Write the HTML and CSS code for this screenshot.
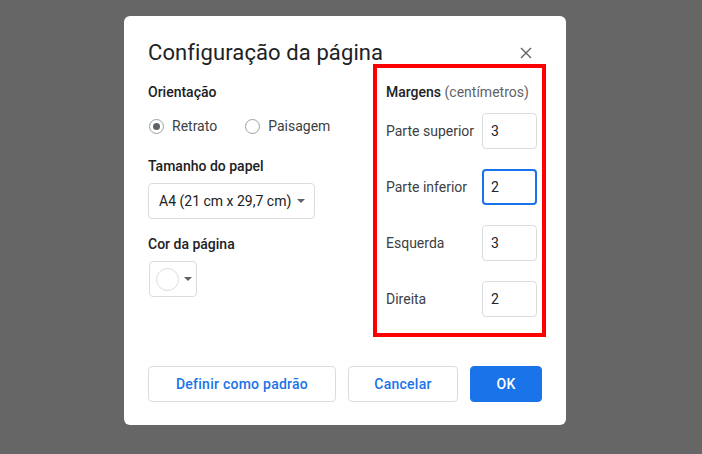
FILE: index.html
```html
<!DOCTYPE html>
<html lang="pt">
<head>
<meta charset="utf-8">
<title>Configuração da página</title>
<link rel="stylesheet" href="styles.css">
</head>
<body>
<div class="dialog">
  <div class="header">
    <div class="title">Configuração da página</div>
    <button class="close" aria-label="Fechar">
      <svg width="12" height="12" viewBox="0 0 12 12"><path d="M1 1L11 11M11 1L1 11" stroke="#5f6368" stroke-width="1.4" fill="none"/></svg>
    </button>
  </div>
  <div class="content">
    <div class="left">
      <div class="label label-orient">Orientação</div>
      <div class="radios">
        <label class="radio"><span class="dot checked"></span>Retrato</label>
        <label class="radio"><span class="dot"></span>Paisagem</label>
      </div>
      <div class="label label-size">Tamanho do papel</div>
      <div class="select">A4 (21 cm x 29,7 cm)<span class="caret"></span></div>
      <div class="label label-color">Cor da página</div>
      <div class="colorbtn"><span class="swatch"></span><span class="caret"></span></div>
    </div>
    <div class="margins">
      <div class="label label-margins">Margens <span class="unit">(centímetros)</span></div>
      <div class="mrow"><span>Parte superior</span><div class="input">3</div></div>
      <div class="mrow"><span>Parte inferior</span><div class="input focused">2</div></div>
      <div class="mrow"><span>Esquerda</span><div class="input">3</div></div>
      <div class="mrow"><span>Direita</span><div class="input">2</div></div>
    </div>
  </div>
  <div class="actions">
    <button class="btn btn-outline btn-default">Definir como padrão</button>
    <button class="btn btn-outline btn-cancel">Cancelar</button>
    <button class="btn btn-primary">OK</button>
  </div>
</div>
</body>
</html>
```

FILE: styles.css
```css
html, body {
  margin: 0;
  padding: 0;
  background: #666666;
  width: 702px;
  height: 454px;
  overflow: hidden;
}

body {
  font-family: Roboto, "Liberation Sans", Arial, sans-serif;
  color: #202124;
}

.dialog {
  box-sizing: border-box;
  margin: 16px 0 0 124px;
  width: 442px;
  height: 409px;
  background: #ffffff;
  border-radius: 6px;
  padding: 26px 24px 23px 24px;
  display: flex;
  flex-direction: column;
}

.header {
  height: 22px;
  display: flex;
  align-items: center;
  justify-content: space-between;
}

.title {
  font-size: 22px;
  line-height: 22px;
  color: #202124;
  font-weight: 400;
  letter-spacing: 0.1px;
}

.close {
  border: 0;
  background: transparent;
  padding: 0;
  margin: 0 10px 0 0;
  width: 12px;
  height: 12px;
  display: flex;
}

.content {
  display: flex;
  height: 273px;
  align-items: flex-start;
}

.left {
  width: 225px;
  flex-shrink: 0;
  display: flex;
  flex-direction: column;
  align-items: flex-start;
}

.label {
  font-size: 14px;
  line-height: 20px;
  font-weight: 500;
  color: #202124;
}

.label-orient { margin-top: 18px; }
.label-size { margin-top: 20px; }
.label-color { margin-top: 15px; }

.radios {
  margin-top: 14px;
  display: flex;
  gap: 27px;
  height: 20px;
  align-items: center;
}

.radio {
  display: flex;
  align-items: center;
  gap: 8px;
  font-size: 14px;
  color: #3c4043;
  margin-left: 1px;
}

.dot {
  box-sizing: border-box;
  width: 15px;
  height: 15px;
  border-radius: 50%;
  border: 1px solid #9aa0a6;
  display: flex;
  align-items: center;
  justify-content: center;
}

.dot.checked::after {
  content: "";
  width: 7px;
  height: 7px;
  border-radius: 50%;
  background: #5f6368;
}

.select {
  box-sizing: border-box;
  margin-top: 7px;
  height: 36px;
  width: 167px;
  border: 1px solid #dadce0;
  border-radius: 4px;
  padding: 0 9px 0 10px;
  display: flex;
  align-items: center;
  justify-content: space-between;
  font-size: 14px;
  color: #202124;
}

.caret {
  width: 0;
  height: 0;
  border-left: 4px solid transparent;
  border-right: 4px solid transparent;
  border-top: 4px solid #5f6368;
}

.colorbtn {
  box-sizing: border-box;
  margin-top: 7px;
  margin-left: 1px;
  width: 48px;
  height: 36px;
  border: 1px solid #dadce0;
  border-radius: 4px;
  display: flex;
  align-items: center;
  padding-left: 6px;
  gap: 5px;
}

.swatch {
  box-sizing: border-box;
  width: 23px;
  height: 23px;
  border-radius: 50%;
  border: 1px solid #dadce0;
  background: #fff;
}

.margins {
  box-sizing: border-box;
  flex-shrink: 0;
  width: 173px;
  height: 273px;
  margin-right: -4px;
  border: 4px solid #ff0000;
  padding: 14px 5px 16px 9px;
  display: flex;
  flex-direction: column;
}

.unit {
  font-weight: 400;
  color: #5f6368;
}

.label-margins {
  margin-bottom: 11px;
}

.mrow {
  display: flex;
  align-items: center;
  justify-content: space-between;
  height: 36px;
  margin-bottom: 20px;
  font-size: 14px;
  color: #3c4043;
}

.mrow:last-child { margin-bottom: 0; }

.input {
  box-sizing: border-box;
  width: 55px;
  height: 36px;
  border: 1px solid #dadce0;
  border-radius: 4px;
  padding-left: 8px;
  display: flex;
  align-items: center;
  font-size: 14px;
  color: #202124;
}

.input.focused {
  border: 2px solid #1a73e8;
  padding-left: 7px;
}

.actions {
  margin-top: 29px;
  display: flex;
  justify-content: flex-end;
  gap: 12px;
}

.btn {
  box-sizing: border-box;
  height: 36px;
  border-radius: 4px;
  font-family: Roboto, "Liberation Sans", Arial, sans-serif;
  font-size: 14px;
  font-weight: 500;
  letter-spacing: 0.25px;
  padding: 0;
  cursor: pointer;
}

.btn-outline {
  background: #fff;
  border: 1px solid #dadce0;
  color: #1a73e8;
}

.btn-default { width: 188px; }
.btn-cancel { width: 110px; }

.btn-primary {
  width: 72px;
  background: #1a73e8;
  border: 1px solid #1a73e8;
  color: #fff;
}
```
